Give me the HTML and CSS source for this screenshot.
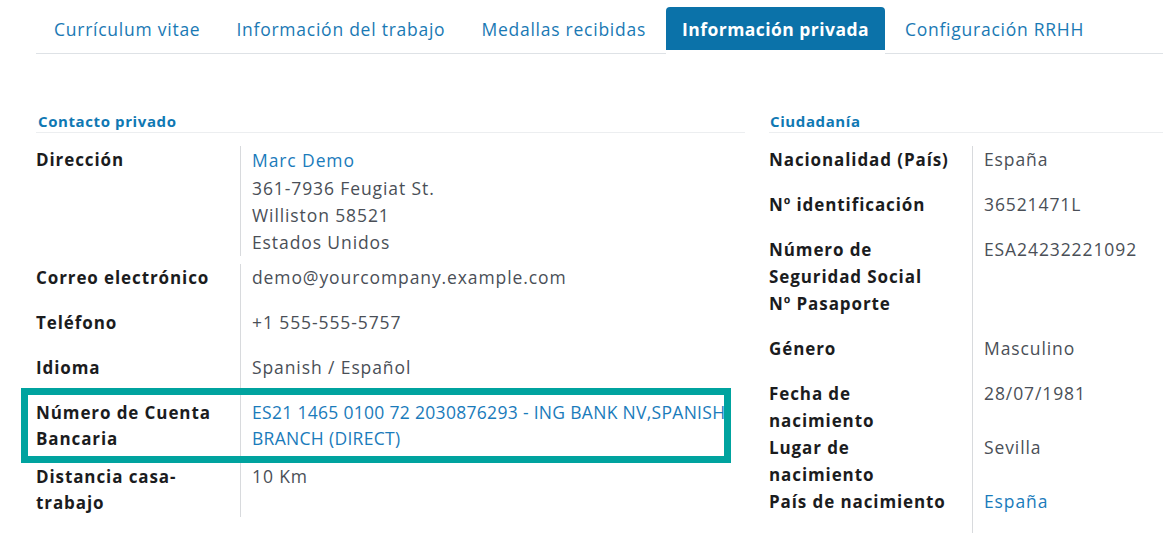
FILE: index.html
```html
<!DOCTYPE html>
<html lang="es">
<head>
<meta charset="utf-8">
<title>Información privada</title>
<link rel="stylesheet" href="styles.css">
</head>
<body>
<nav class="tabs">
  <a class="tab">Currículum vitae</a>
  <a class="tab">Información del trabajo</a>
  <a class="tab">Medallas recibidas</a>
  <a class="tab tab-active">Información privada</a>
  <a class="tab">Configuración RRHH</a>
</nav>
<main class="sheet">
  <section class="group group-left">
    <h3 class="group-title">Contacto privado</h3>
    <div class="rows">
      <div class="row row-address">
        <div class="label">Dirección</div>
        <div class="value">
          <a class="link link-name">Marc Demo</a>
          <div class="addr">361-7936 Feugiat St.</div>
          <div class="addr">Williston 58521</div>
          <div class="addr">Estados Unidos</div>
        </div>
      </div>
      <div class="row">
        <div class="label">Correo electrónico</div>
        <div class="value">demo@yourcompany.example.com</div>
      </div>
      <div class="row">
        <div class="label">Teléfono</div>
        <div class="value">+1 555-555-5757</div>
      </div>
      <div class="row">
        <div class="label">Idioma</div>
        <div class="value">Spanish / Español</div>
      </div>
      <div class="row row-bank">
        <div class="label">Número de Cuenta Bancaria</div>
        <div class="value"><a class="link link-bank">ES21 1465 0100 72 2030876293 - ING BANK NV,SPANISH BRANCH (DIRECT)</a></div>
        <div class="highlight"></div>
      </div>
      <div class="row">
        <div class="label">Distancia casa-trabajo</div>
        <div class="value">10 Km</div>
      </div>
    </div>
  </section>
  <section class="group group-right">
    <h3 class="group-title">Ciudadanía</h3>
    <div class="rows">
      <div class="row">
        <div class="label">Nacionalidad (País)</div>
        <div class="value">España</div>
      </div>
      <div class="row">
        <div class="label">Nº identificación</div>
        <div class="value">36521471L</div>
      </div>
      <div class="row">
        <div class="label">Número de Seguridad Social</div>
        <div class="value">ESA24232221092</div>
      </div>
      <div class="row">
        <div class="label">Nº Pasaporte</div>
        <div class="value"></div>
      </div>
      <div class="row">
        <div class="label">Género</div>
        <div class="value">Masculino</div>
      </div>
      <div class="row">
        <div class="label">Fecha de nacimiento</div>
        <div class="value">28/07/1981</div>
      </div>
      <div class="row">
        <div class="label">Lugar de nacimiento</div>
        <div class="value">Sevilla</div>
      </div>
      <div class="row">
        <div class="label">País de nacimiento</div>
        <div class="value"><a class="link">España</a></div>
      </div>
    </div>
  </section>
</main>
</body>
</html>
```
FILE: styles.css
```css
* { box-sizing: border-box; }
html, body { margin: 0; padding: 0; background: #fff; }
body {
  font-family: "Open Sans", "Liberation Sans", sans-serif;
  font-size: 17.5px;
  letter-spacing: 0.9px;
  color: #4a4f57;
  overflow: hidden;
}

.tabs {
  display: flex;
  margin-left: 36px;
  padding-top: 7px;
  height: 54px;
  border-bottom: 1px solid #dee2e6;
}
.tab {
  display: block;
  height: 47px;
  margin: 0 2px -1px;
  padding: 0 16px;
  line-height: 44px;
  font-size: 17.5px;
  letter-spacing: 0.75px;
  color: #1a79b4;
  white-space: nowrap;
}
.tab-active {
  background: linear-gradient(#0b72a9 0 43px, #fff 43px);
  border-radius: 4px 4px 0 0;
  color: #fff;
  font-weight: 700;
  letter-spacing: 0.45px;
}

.sheet {
  display: flex;
  gap: 24px;
  margin-left: 36px;
  padding-top: 57px;
}
.group-left { width: 709px; flex: none; }
.group-right { flex: 1; }

.group-title {
  margin: 0 0 13px;
  padding: 0 0 0 2px;
  height: 22px;
  line-height: 20px;
  font-size: 15px;
  letter-spacing: 0.6px;
  font-weight: 700;
  color: #0f78b3;
  border-bottom: 1px solid #eceef0;
}
.group-right .group-title { padding-left: 1px; }

.rows { display: flex; flex-direction: column; }
.row {
  display: flex;
  min-height: 45px;
  position: relative;
}
.label {
  width: 204px;
  flex: none;
  padding-right: 20px;
  padding-top: 1px;
  line-height: 26.5px;
  font-size: 17px;
  letter-spacing: 0.9px;
  font-weight: 700;
  color: #1b1c1e;
}
.group-right .label { width: 203px; }
.value {
  flex: 1;
  border-left: 1px solid #d8dadd;
  padding-left: 11px;
  line-height: 26.5px;
}
.link { color: #1a7bbb; text-decoration: none; }
.link-name { display: block; line-height: 29px; }
.link-bank { letter-spacing: 0.3px; }
.addr { line-height: 27px; }
.row-address { padding-bottom: 7.5px; }
.row-bank { min-height: 64px; }

.highlight {
  position: absolute;
  left: -15px;
  top: -10.5px;
  width: 710px;
  height: 75px;
  border: 7px solid #00a39f;
  pointer-events: none;
}
```
